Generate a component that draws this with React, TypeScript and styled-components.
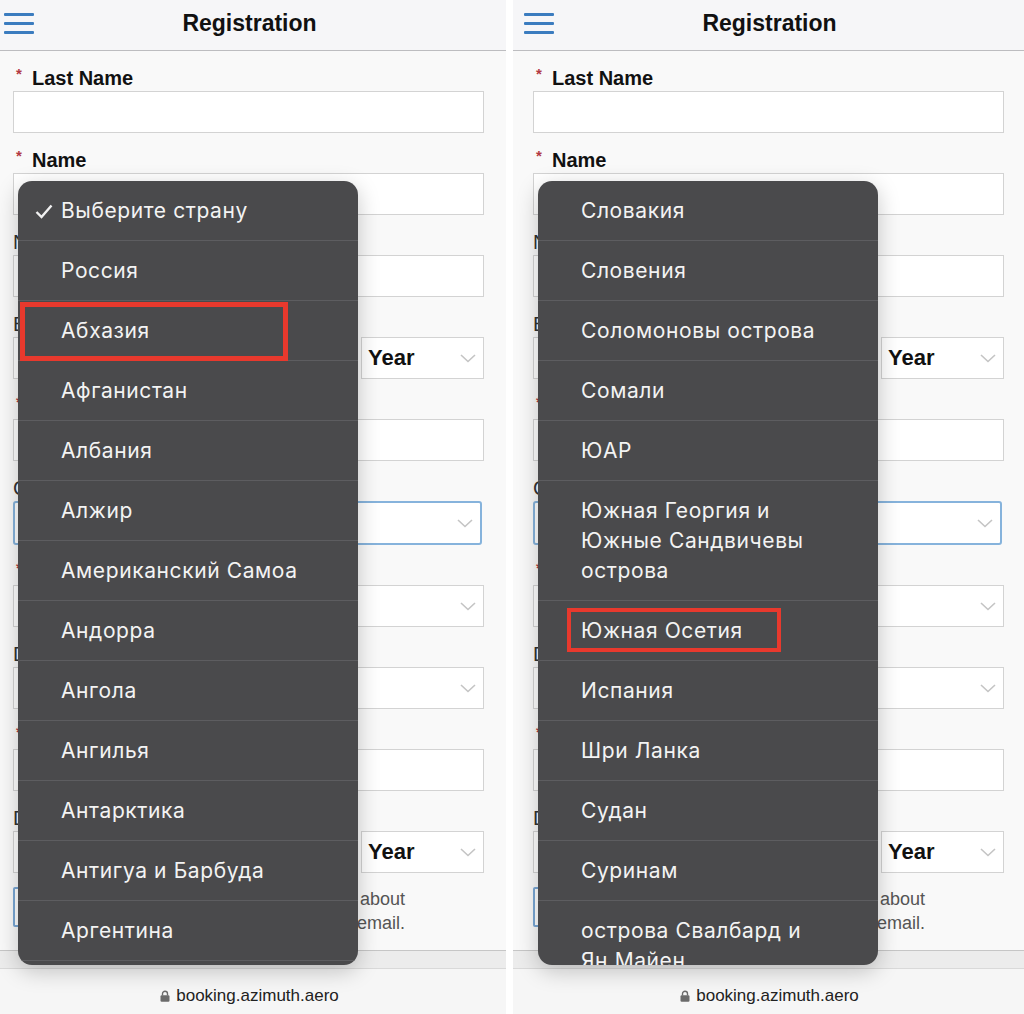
import React from 'react'
import styled, { createGlobalStyle } from 'styled-components'

const GlobalStyle = createGlobalStyle`
	html, body {
		margin: 0;
		padding: 0;
		background: #ffffff;
	}
	body {
		font-family: "Liberation Sans", Arial, sans-serif;
	}
	* {
		box-sizing: border-box;
	}
`

const Screen = styled.div`
	display: flex;
	gap: 7px;
	width: 1024px;
	height: 1014px;
	overflow: hidden;
	background: #ffffff;
`

const Frame = styled.div<{ $width: number }>`
	width: ${(p) => p.$width}px;
	height: 1014px;
	flex-shrink: 0;
	overflow: hidden;
`

const Phone = styled.div<{ $crop: number }>`
	position: relative;
	width: 513px;
	height: 1014px;
	margin-left: ${(p) => -p.$crop}px;
	display: flex;
	flex-direction: column;
	background: #f9f9f9;
`

const Header = styled.header`
	height: 51px;
	flex-shrink: 0;
	display: grid;
	grid-template-columns: 70px 1fr 70px;
	align-items: center;
	background: #f6f6f8;
	border-bottom: 1px solid #bdbdc0;
`

const Burger = styled.div`
	width: 30px;
	margin-left: 11px;
	margin-top: -4px;
	display: flex;
	flex-direction: column;
	gap: 6px;
`

const BurgerBar = styled.span`
	display: block;
	height: 3px;
	border-radius: 1px;
	background: #3b7cbf;
`

const Title = styled.h1`
	margin: 0 0 4px;
	text-align: center;
	font-size: 23px;
	font-weight: 700;
	color: #111111;
`

const Form = styled.div`
	flex: 1;
	overflow: hidden;
	padding: 0 22px 0 20px;
`

const Label = styled.div<{ $required?: boolean }>`
	display: flex;
	align-items: center;
	height: 22px;
	margin: 16px 0 2px;
	font-size: 20px;
	line-height: 22px;
	white-space: nowrap;
	font-weight: ${(p) => (p.$required ? 700 : 400)};
	color: ${(p) => (p.$required ? '#111111' : '#333333')};
`

const Star = styled.span`
	width: 19px;
	padding-left: 3px;
	align-self: flex-start;
	font-size: 15px;
	line-height: 14px;
	color: #b23a44;
`

const Input = styled.div`
	height: 42px;
	background: #ffffff;
	border: 1.5px solid #d3d3d3;
`

const Select = styled.div<{ $focused?: boolean; $width?: number }>`
	height: ${(p) => (p.$focused ? 44 : 42)}px;
	${(p) => (p.$width ? `width: ${p.$width}px; flex-shrink: 0;` : 'flex: 1;')}
	display: flex;
	align-items: center;
	justify-content: space-between;
	padding: 0 7px 0 6px;
	background: #ffffff;
	border: ${(p) => (p.$focused ? '2.5px solid #86b3dc' : '1.5px solid #d3d3d3')};
	border-radius: ${(p) => (p.$focused ? 3 : 0)}px;
	margin-right: ${(p) => (p.$focused ? 2 : 0)}px;
`

const SelectValue = styled.span`
	font-size: 22px;
	font-weight: 700;
	color: #111111;
`

const DateRow = styled.div`
	display: flex;
	gap: 10px;
`

const AgreeRow = styled.div`
	display: flex;
	margin-top: 14px;
`

const AgreeBox = styled.div`
	width: 40px;
	height: 40px;
	flex-shrink: 0;
	background: #ffffff;
	border: 2px solid #7aa7d4;
	border-radius: 2px;
`

const AgreeText = styled.div`
	flex: 1;
	margin: 0 79px 0 12px;
	text-align: right;
	font-size: 18px;
	line-height: 24px;
	color: #555555;
`

const BottomBand = styled.div`
	height: 19px;
	flex-shrink: 0;
	background: #ececec;
	border-top: 1px solid #c6c6c6;
	border-bottom: 1px solid #d9d9d9;
`

const AddressBar = styled.div`
	height: 45px;
	flex-shrink: 0;
	display: flex;
	justify-content: center;
	align-items: flex-start;
	gap: 6px;
	padding-top: 16px;
	background: #f6f6f6;
	font-size: 17px;
	line-height: 22px;
	color: #222222;
`

const Lock = styled.svg`
	margin-top: 5px;
`

const Menu = styled.div`
	position: absolute;
	top: 181px;
	left: 25px;
	width: 340px;
	height: 784px;
	overflow: hidden;
	border-radius: 14px;
	background: #4a4a4c;
	box-shadow: 0 6px 22px rgba(0, 0, 0, 0.22);
`

const Option = styled.div`
	position: relative;
	display: flex;
	padding: 15px 30px 14px 0;
	border-bottom: 1px solid #5d5d60;
	font-family: Inter, "Liberation Sans", sans-serif;
	font-size: 21px;
	letter-spacing: 0.6px;
	line-height: 30px;
	color: #f3f3f3;
	white-space: pre-line;
`

const Mark = styled.span`
	width: 43px;
	flex-shrink: 0;
	padding: 8px 0 0 17px;
	line-height: 0;
`

const Highlight = styled.div<{ $left: number; $top: number; $width: number; $height: number; $stroke: number }>`
	position: absolute;
	left: ${(p) => p.$left}px;
	top: ${(p) => p.$top}px;
	width: ${(p) => p.$width}px;
	height: ${(p) => p.$height}px;
	border: ${(p) => p.$stroke}px solid #e8392d;
`

type Box = { left: number; top: number; width: number; height: number; stroke: number }
type Item = { text: string; checked?: boolean; box?: Box }

const leftItems: Item[] = [
	{ text: 'Выберите страну', checked: true },
	{ text: 'Россия' },
	{ text: 'Абхазия', box: { left: 2, top: 1, width: 268, height: 59, stroke: 5 } },
	{ text: 'Афганистан' },
	{ text: 'Албания' },
	{ text: 'Алжир' },
	{ text: 'Американский Самоа' },
	{ text: 'Андорра' },
	{ text: 'Ангола' },
	{ text: 'Ангилья' },
	{ text: 'Антарктика' },
	{ text: 'Антигуа и Барбуда' },
	{ text: 'Аргентина' },
	{ text: 'Армения' },
]

const rightItems: Item[] = [
	{ text: 'Словакия' },
	{ text: 'Словения' },
	{ text: 'Соломоновы острова' },
	{ text: 'Сомали' },
	{ text: 'ЮАР' },
	{ text: 'Южная Георгия и\nЮжные Сандвичевы\nострова' },
	{ text: 'Южная Осетия', box: { left: 29, top: 7, width: 214, height: 44, stroke: 4 } },
	{ text: 'Испания' },
	{ text: 'Шри Ланка' },
	{ text: 'Судан' },
	{ text: 'Суринам' },
	{ text: 'острова Свалбард и\nЯн Майен' },
]

const Chevron = () => (
	<svg width="16" height="9" viewBox="0 0 16 9">
		<polyline points="1,1 8,7.5 15,1" fill="none" stroke="#c4c4c4" strokeWidth="1.6" />
	</svg>
)

const CountryMenu = ({ items }: { items: Item[] }) => (
	<Menu>
		{items.map((item) => (
			<Option key={item.text}>
				<Mark>
					{item.checked && (
						<svg width="18" height="15" viewBox="0 0 18 15">
							<polyline points="1.5,8 6.5,13 16.5,1.5" fill="none" stroke="#f1f1f1" strokeWidth="2.4" />
						</svg>
					)}
				</Mark>
				<span>{item.text}</span>
				{item.box && (
					<Highlight
						$left={item.box.left}
						$top={item.box.top}
						$width={item.box.width}
						$height={item.box.height}
						$stroke={item.box.stroke}
					/>
				)}
			</Option>
		))}
	</Menu>
)

const DateSelects = () => (
	<DateRow>
		<Select>
			<span />
			<Chevron />
		</Select>
		<Select>
			<span />
			<Chevron />
		</Select>
		<Select $width={123}>
			<SelectValue>Year</SelectValue>
			<Chevron />
		</Select>
	</DateRow>
)

const Registration = ({ crop, items }: { crop: number; items: Item[] }) => (
	<Phone $crop={crop}>
		<Header>
			<Burger>
				<BurgerBar />
				<BurgerBar />
				<BurgerBar />
			</Burger>
			<Title>Registration</Title>
			<span />
		</Header>
		<Form>
			<Label $required>
				<Star>*</Star>Last Name
			</Label>
			<Input />
			<Label $required>
				<Star>*</Star>Name
			</Label>
			<Input />
			<Label>Name in Latin</Label>
			<Input />
			<Label>Birth date</Label>
			<DateSelects />
			<Label $required>
				<Star>*</Star>Email
			</Label>
			<Input />
			<Label>Citizenship</Label>
			<Select $focused>
				<span />
				<Chevron />
			</Select>
			<Label $required>
				<Star>*</Star>Document type
			</Label>
			<Select>
				<span />
				<Chevron />
			</Select>
			<Label>Document country</Label>
			<Select>
				<span />
				<Chevron />
			</Select>
			<Label $required>
				<Star>*</Star>Document number
			</Label>
			<Input />
			<Label>Document expiry date</Label>
			<DateSelects />
			<AgreeRow>
				<AgreeBox />
				<AgreeText>
					I want to receive information about
					<br />
					flights and special offers by email.
				</AgreeText>
			</AgreeRow>
		</Form>
		<BottomBand />
		<AddressBar>
			<Lock width="10" height="12" viewBox="0 0 10 12">
				<path d="M2.5 5.5V3.8a2.5 2.5 0 0 1 5 0v1.7" fill="none" stroke="#6b6b6b" strokeWidth="1.4" />
				<rect x="0.5" y="5.3" width="9" height="6.4" rx="1.2" fill="#6b6b6b" />
			</Lock>
			booking.azimuth.aero
		</AddressBar>
		<CountryMenu items={items} />
	</Phone>
)

export default function App() {
	return (
		<>
			<GlobalStyle />
			<Screen>
				<Frame $width={506}>
					<Registration crop={7} items={leftItems} />
				</Frame>
				<Frame $width={511}>
					<Registration crop={0} items={rightItems} />
				</Frame>
			</Screen>
		</>
	)
}
